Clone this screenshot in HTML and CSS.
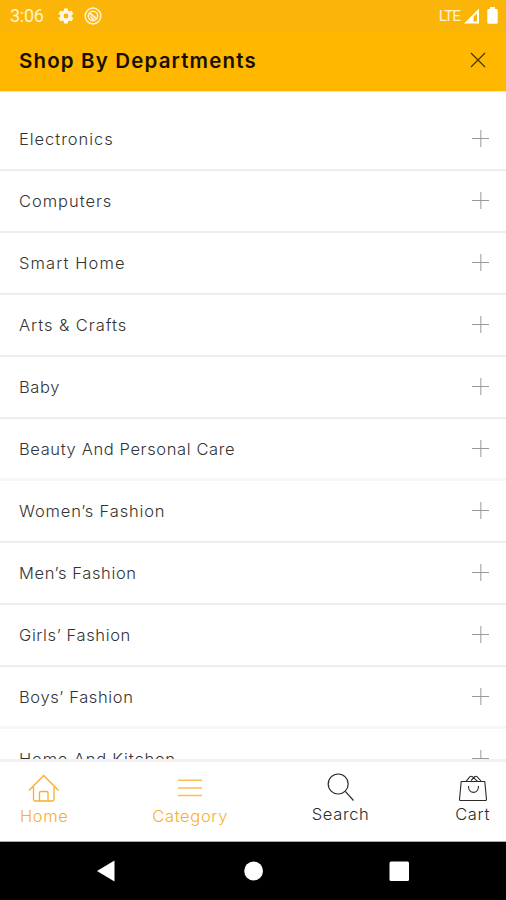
FILE: index.html
```html
<!DOCTYPE html>
<html lang="en">
<head>
<meta charset="utf-8">
<title>Shop By Departments</title>
<link rel="stylesheet" href="styles.css">
</head>
<body>
<div class="screen">
  <header class="header">
    <div class="status">
      <span class="time">3:06</span>
      <svg class="gear" width="18" height="18" viewBox="0 0 24 24"><path fill="#fff8e4" fill-rule="evenodd" d="M19.4 13c.1-.7.1-1.300 0-2l2.100-1.600c.2-.2.300-.4.100-.7l-2-3.400c-.1-.2-.4-.3-.6-.2l-2.500 1c-.5-.4-1.100-.7-1.700-1l-.4-2.600c0-.3-.2-.5-.5-.5h-4c-.3 0-.5.2-.5.5L9 5.100c-.6.3-1.200.6-1.700 1l-2.500-1c-.2-.1-.5 0-.6.2l-2 3.400c-.1.2-.1.500.1.700L4.500 11c-.1.700-.1 1.300 0 2l-2.200 1.600c-.2.200-.2.400-.1.700l2 3.400c.1.200.4.300.6.200l2.500-1c.5.400 1.100.7 1.700 1l.4 2.600c0 .3.200.5.500.5h4c.3 0 .5-.2.500-.5l.4-2.600c.6-.3 1.200-.6 1.700-1l2.500 1c.2.100.5 0 .6-.2l2-3.400c.1-.3.100-.5-.1-.7zM12 15.300a3.300 3.300 0 1 1 0-6.600 3.300 3.300 0 0 1 0 6.600z"/></svg>
      <svg class="sync" width="18" height="18" viewBox="0 0 18 18" fill="none" stroke="#fff4d6"><circle cx="9" cy="9" r="7.900" stroke-width="1.500"/><circle cx="9" cy="9" r="4.700" stroke-width="1.500"/><path stroke-width="1.700" d="M5.500 6l7.300 6"/><path d="M5.500 8l5.300 4.400-3 .6z" fill="#fff4d6" stroke="none"/></svg>
      <span class="lte">LTE</span>
      <svg class="signal" width="16" height="16" viewBox="0 0 16 16"><path fill="#fff" fill-rule="evenodd" d="M0 15.500 15 0.500v15zM9.500 9v4.600h3.500V5.300z"/></svg>
      <svg class="battery" width="11" height="17" viewBox="0 0 11 17"><path fill="#fff" d="M3 0h5v2h1.500q1.200 0 1.200 1.200v12.300q0 1.200-1.200 1.200h-8q-1.200 0-1.200-1.200V3.200Q.3 2 1.500 2H3z"/></svg>
    </div>
    <div class="titlebar">
      <h1>Shop By Departments</h1>
      <svg class="close" width="16" height="16" viewBox="0 0 16 16"><path d="M1 1l14 14M15 1L1 15" stroke="#4b3700" stroke-width="1.200"/></svg>
    </div>
  </header>
  <main class="list">
    <div class="row wide"><span>Electronics</span><i class="plus"></i></div>
    <div class="row wide"><span>Computers</span><i class="plus"></i></div>
    <div class="row wider"><span>Smart Home</span><i class="plus"></i></div>
    <div class="row wide"><span>Arts &amp; Crafts</span><i class="plus"></i></div>
    <div class="row"><span>Baby</span><i class="plus"></i></div>
    <div class="row soft"><span>Beauty And Personal Care</span><i class="plus"></i></div>
    <div class="row mid"><span>Women’s Fashion</span><i class="plus"></i></div>
    <div class="row"><span>Men’s Fashion</span><i class="plus"></i></div>
    <div class="row"><span>Girls’ Fashion</span><i class="plus"></i></div>
    <div class="row soft"><span>Boys’ Fashion</span><i class="plus"></i></div>
    <div class="row mid"><span>Home And Kitchen</span><i class="plus"></i></div>
  </main>
  <nav class="tabs">
    <a class="tab active home">
      <svg width="32" height="30" viewBox="0 0 32 30" fill="none" stroke="currentColor" stroke-width="1.300" stroke-linejoin="round"><path d="M1 18.500 15.700 3.500 30.500 18.500M5.500 15v12.500q0 1.500 1.500 1.500h17.500q1.500 0 1.500-1.500V15M11.500 29V21q0-1.500 1.500-1.500h5.500q1.500 0 1.500 1.500v8"/></svg>
      <span>Home</span>
    </a>
    <a class="tab active category">
      <svg width="24" height="30" viewBox="0 0 24 30" stroke="currentColor" stroke-width="1.500" opacity=".8"><path d="M0 8.300h24M0 16h24M0 23.500h24"/></svg>
      <span>Category</span>
    </a>
    <a class="tab search">
      <svg width="28" height="30" viewBox="0 0 28 30" fill="none" stroke="currentColor" stroke-width="1.200"><circle cx="11.200" cy="12" r="10"/><path d="M18.300 19.300 26.500 28.500"/></svg>
      <span>Search</span>
    </a>
    <a class="tab cart">
      <svg width="30" height="30" viewBox="0 0 30 30" fill="none" stroke="currentColor" stroke-width="1.100" stroke-linejoin="round"><path d="M3.200 9.500h23.600L28.500 27.500q0 1-1 1h-25q-1 0-1-1zM8 9.300l4-4.600q1-1 2.500 0l5 4.600M13 8.500l4-4q1-.7 2 .2L23 9M10.500 14c0 8.500 10 8.500 10 0"/></svg>
      <span>Cart</span>
    </a>
  </nav>
  <footer class="system">
    <svg width="506" height="58" viewBox="0 0 506 58" fill="#fff"><path d="M97 29 114.500 18.500v21z"/><circle cx="253.600" cy="29" r="9.400"/><rect x="389.500" y="19.500" width="19.500" height="19.500" rx="1.500"/></svg>
  </footer>
</div>
</body>
</html>
```
FILE: styles.css
```css
* { box-sizing: border-box; }
body { margin: 0; font-family: Inter, "Liberation Sans", sans-serif; background: #fff; }
.screen { width: 506px; height: 900px; display: flex; flex-direction: column; overflow: hidden; }
.header { height: 91px; background: #ffb700; flex: none; box-shadow: 0 1px 0 #ffe3b0; }
.status { height: 31px; display: flex; align-items: center; padding: 0 8px 0 10px; background: #fbb509; }
.time { font: 400 18px/30px Roboto, sans-serif; letter-spacing: -0.3px; color: #fff2d0; width: 47px; }
.sync { margin-left: 9px; }
.lte { font: 400 15.500px/30px Roboto, sans-serif; letter-spacing: -1px; color: #fff2d0; margin-left: auto; }
.signal { margin-left: 4px; }
.battery { margin-left: 7px; }
.titlebar { height: 60px; display: flex; align-items: center; justify-content: space-between; padding: 0 20px 2px 19px; }
h1 { margin: 0; font-size: 20.500px; font-weight: 600; letter-spacing: 1.150px; color: #171000; white-space: nowrap; }
.list { flex: 1; min-height: 0; overflow: hidden; padding-top: 18px; }
.row { height: 62px; border-bottom: 2px solid #eee; display: flex; align-items: center; justify-content: space-between; padding: 0 17px 0 19px; font-size: 16.500px; font-weight: 300; letter-spacing: 0.620px; color: #333; white-space: nowrap; }
.row.mid { letter-spacing: 0.820px; }
.row.wide { letter-spacing: 0.960px; }
.row.wider { letter-spacing: 1.100px; }
.row.soft { border-bottom: 3px solid #f6f6f6; }
.plus { width: 17px; height: 17px; background: linear-gradient(#999, #999) center / 17px 1px no-repeat, linear-gradient(#bbb, #bbb) center / 1.500px 17px no-repeat; margin-bottom: 2px; }
.row.soft .plus { margin-bottom: 1px; }
.tabs { height: 83px; flex: none; border-top: 3px solid #f1f1f1; border-bottom: 1px solid #aaa; display: flex; justify-content: space-between; padding: 10px 16px 0 20px; color: #2a2a2a; }
.tab { display: flex; flex-direction: column; align-items: center; font-size: 16.500px; font-weight: 300; letter-spacing: 0.650px; line-height: 22px; }
.tab svg { display: block; }
.tab span { padding-top: 1px; }
.tab.active span { padding-top: 3px; }
.active { color: #f8ae2b; }
.search { margin-right: 2px; }
.system { height: 58px; background: #000; flex: none; }
.system svg { display: block; }
```
